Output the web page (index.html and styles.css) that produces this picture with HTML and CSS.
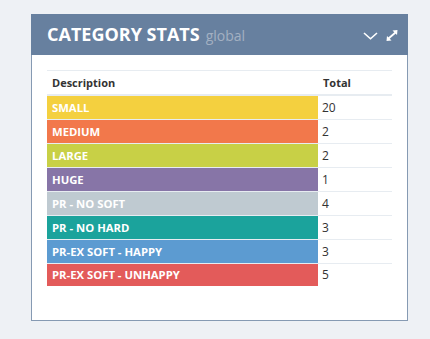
FILE: index.html
```html
<!DOCTYPE html>
<html>
<head>
<meta charset="utf-8">
<link rel="stylesheet" href="styles.css">
</head>
<body>
<div class="portlet">
  <div class="portlet-title">
    <div class="caption"><span class="caption-main">CATEGORY STATS</span><span class="caption-sub">global</span></div>
    <div class="tools">
      <svg class="icon-collapse" width="15" height="8" viewBox="0 0 15 8"><polyline points="1,1 7.5,6.8 14,1" fill="none" stroke="#fff" stroke-width="1.6"/></svg>
      <svg class="icon-expand" width="12" height="11" viewBox="0 0 12 11"><line x1="2.5" y1="8.5" x2="9.5" y2="2.5" stroke="#fff" stroke-width="1.8"/><polygon points="11.5,0 6.5,0.5 11,5" fill="#fff"/><polygon points="0.5,11 5.5,10.5 1,6" fill="#fff"/></svg>
    </div>
  </div>
  <div class="portlet-body">
    <table class="stats">
      <thead>
        <tr><th class="col-desc">Description</th><th class="col-total">Total</th></tr>
      </thead>
      <tbody>
        <tr><td class="cat c-small">SMALL</td><td class="num">20</td></tr>
        <tr><td class="cat c-medium">MEDIUM</td><td class="num">2</td></tr>
        <tr><td class="cat c-large">LARGE</td><td class="num">2</td></tr>
        <tr><td class="cat c-huge">HUGE</td><td class="num">1</td></tr>
        <tr><td class="cat c-nosoft">PR - NO SOFT</td><td class="num">4</td></tr>
        <tr><td class="cat c-nohard">PR - NO HARD</td><td class="num">3</td></tr>
        <tr><td class="cat c-happy">PR-EX SOFT - HAPPY</td><td class="num">3</td></tr>
        <tr><td class="cat c-unhappy">PR-EX SOFT - UNHAPPY</td><td class="num">5</td></tr>
      </tbody>
    </table>
  </div>
</div>
</body>
</html>
```

FILE: styles.css
```css
html, body {
  margin: 0;
  padding: 0;
  background: #eef1f5;
  font-family: "Open Sans", "Liberation Sans", sans-serif;
}
body {
  padding: 14px 0 0 31px;
}
.portlet {
  width: 377px;
  background: #fff;
}
.portlet-title {
  height: 41px;
  background: #67809f;
  display: flex;
  align-items: center;
  justify-content: space-between;
  padding: 0 10px 0 16px;
  box-sizing: border-box;
}
.caption {
  display: flex;
  align-items: baseline;
  gap: 6px;
  margin-top: 1px;
}
.caption-main {
  color: #fff;
  font-size: 18px;
  font-weight: 700;
  line-height: 20px;
}
.caption-sub {
  color: #a3b0c2;
  font-size: 14px;
  line-height: 20px;
}
.tools {
  display: flex;
  align-items: center;
  gap: 8px;
  margin-top: 1px;
}
.icon-collapse { display: block; margin-top: 2px; }
.icon-expand { display: block; }
.portlet-body {
  border: 1px solid #869ab3;
  border-top: 0;
  padding: 15px 15px 34px 15px;
}
.stats {
  width: 345px;
  border-collapse: collapse;
  border-top: 1px solid #e7ecf1;
}
.stats th {
  text-align: left;
  font-size: 11px;
  font-weight: 700;
  color: #333;
  height: 23px;
  padding: 0 5px;
  border-bottom: 2px solid #e7ecf1;
}
.col-desc { width: 271px; box-sizing: border-box; }
.stats td {
  height: 24px;
  box-sizing: border-box;
  padding: 0 5px;
  border-bottom: 1px solid #e7ecf1;
}
.stats tr:last-child td { border-bottom: 0; height: 23px; }
.cat {
  color: #fff;
  font-size: 11.3px;
  font-weight: 700;
}
.num {
  color: #333;
  font-size: 12px;
  padding-left: 4px !important;
}
.c-small { background: #f4d03f; }
.c-medium { background: #f2784b; }
.c-large { background: #c8d046; }
.c-huge { background: #8775a7; }
.c-nosoft { background: #bfcad1; }
.c-nohard { background: #1ba39c; }
.c-happy { background: #5c9bd1; }
.c-unhappy { background: #e35b5a; }
```
